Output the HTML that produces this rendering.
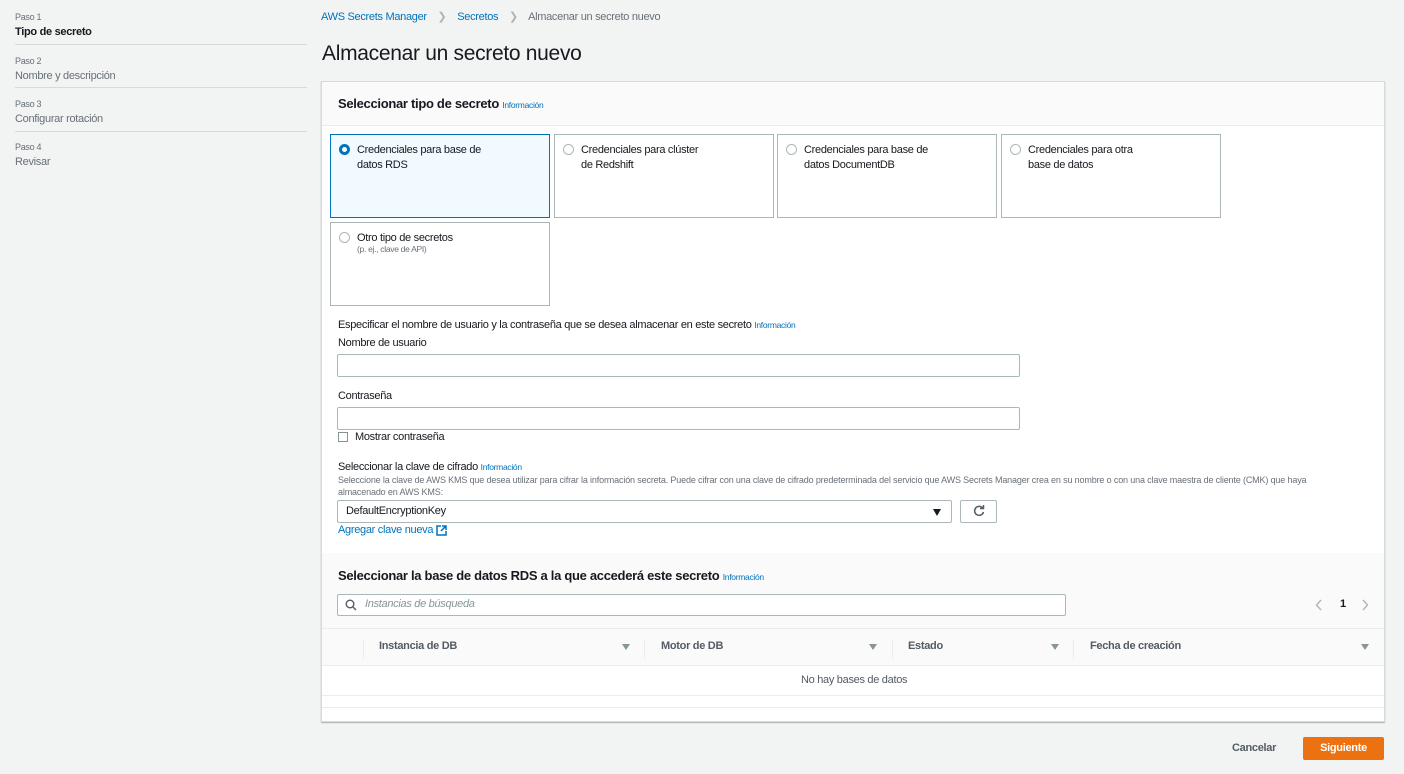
<!DOCTYPE html>
<html><head><meta charset="utf-8"><style>
*{box-sizing:border-box;margin:0;padding:0}
body{width:1404px;height:774px;background:#f2f3f3;font-family:"Liberation Sans",sans-serif;color:#16191f;position:relative;overflow:hidden;letter-spacing:-0.3px}
.a{position:absolute;white-space:nowrap}
.s{font-size:9px;color:#687078}
.st{font-size:11px;color:#687078}
.hr{position:absolute;left:15px;width:292px;height:1px;background:#d5dbdb}
.info{font-size:8.5px;color:#0073bb;font-weight:normal}
.card{position:absolute;width:220px;height:84px;border:1px solid #aab7b8;background:#fff}
.card.sel{border-color:#0073bb;background:#f1faff}
.radio{position:absolute;left:8px;top:9px;width:11px;height:11px;border-radius:50%;border:1px solid #aab7b8;background:#fff}
.sel .radio{border:3px solid #0073bb}
.card .t{position:absolute;left:26px;top:8px;font-size:11px;line-height:15px;color:#16191f}
.inp{position:absolute;border:1px solid #aab7b8;background:#fff;border-radius:2px}
.lab{font-size:11px;color:#16191f}
.th{font-size:11px;font-weight:bold;color:#545b64}
.tri{position:absolute;width:0;height:0;border-left:4px solid transparent;border-right:4px solid transparent;border-top:6px solid #879596}
</style></head><body>
<div class="a s" style="left:15px;top:12px">Paso 1</div>
<div class="a" style="left:15px;top:26px;font-size:11px;font-weight:bold">Tipo de secreto</div>
<div class="hr" style="top:44px"></div>
<div class="a s" style="left:15px;top:56px">Paso 2</div>
<div class="a st" style="left:15px;top:70px">Nombre y descripción</div>
<div class="hr" style="top:87px"></div>
<div class="a s" style="left:15px;top:99px">Paso 3</div>
<div class="a st" style="left:15px;top:113px">Configurar rotación</div>
<div class="hr" style="top:131px"></div>
<div class="a s" style="left:15px;top:142px">Paso 4</div>
<div class="a st" style="left:15px;top:156px">Revisar</div>

<div class="a" style="left:321px;top:10px;font-size:11px;color:#0073bb">AWS Secrets Manager <span style="color:#aab7b8;margin:0 8px">&#x276F;</span> Secretos <span style="color:#aab7b8;margin:0 8px">&#x276F;</span> <span style="color:#687078">Almacenar un secreto nuevo</span></div>
<div class="a" style="left:322px;top:42px;font-size:21px;color:#16191f">Almacenar un secreto nuevo</div>

<div class="a" style="left:321px;top:81px;width:1064px;height:641px;background:#fff;border:1px solid #d5dbdb;box-shadow:0 1px 1px rgba(0,28,36,.3)">
 <div style="position:absolute;left:0;top:0;width:1062px;height:44px;background:#fafafa;border-bottom:1px solid #eaeded"></div>
 <div class="a" style="left:16px;top:14px;font-size:13px;font-weight:bold">Seleccionar tipo de secreto <span class="info">Información</span></div>
 <div class="card sel" style="left:8px;top:52px"><div class="radio"></div><div class="t">Credenciales para base de<br>datos RDS</div></div>
 <div class="card" style="left:232px;top:52px"><div class="radio"></div><div class="t">Credenciales para clúster<br>de Redshift</div></div>
 <div class="card" style="left:455px;top:52px"><div class="radio"></div><div class="t">Credenciales para base de<br>datos DocumentDB</div></div>
 <div class="card" style="left:679px;top:52px"><div class="radio"></div><div class="t">Credenciales para otra<br>base de datos</div></div>
 <div class="card" style="left:8px;top:140px"><div class="radio"></div><div class="t">Otro tipo de secretos<br><span style="font-size:8.5px;color:#687078;position:relative;top:-4px">(p. ej., clave de API)</span></div></div>

 <div class="a lab" style="left:16px;top:237px">Especificar el nombre de usuario y la contraseña que se desea almacenar en este secreto <span class="info">Información</span></div>
 <div class="a lab" style="left:16px;top:255px">Nombre de usuario</div>
 <div class="inp" style="left:15px;top:272px;width:683px;height:23px"></div>
 <div class="a lab" style="left:16px;top:308px">Contraseña</div>
 <div class="inp" style="left:15px;top:325px;width:683px;height:23px"></div>
 <div class="a" style="left:16px;top:350px;width:10px;height:10px;border:1px solid #879596"></div>
 <div class="a lab" style="left:33px;top:349px">Mostrar contraseña</div>

 <div class="a lab" style="left:16px;top:379px">Seleccionar la clave de cifrado <span class="info">Información</span></div>
 <div class="a" style="left:16px;top:392px;font-size:9px;color:#687078;line-height:12px;white-space:normal;width:1010px;letter-spacing:-0.15px">Seleccione la clave de AWS KMS que desea utilizar para cifrar la información secreta. Puede cifrar con una clave de cifrado predeterminada del servicio que AWS Secrets Manager crea en su nombre o con una clave maestra de cliente (CMK) que haya almacenado en AWS KMS:</div>
 <div class="inp" style="left:15px;top:418px;width:615px;height:23px"></div>
 <div class="a lab" style="left:24px;top:423px">DefaultEncryptionKey</div>
 <div class="tri" style="left:611px;top:427px;border-top-color:#16191f;border-left-width:4.5px;border-right-width:4.5px;border-top-width:7px"></div>
 <div class="inp" style="left:638px;top:418px;width:37px;height:23px"></div>
 <svg class="a" style="left:650px;top:422px" width="14" height="14" viewBox="0 0 14 14"><path d="M11 4.5A4.5 4.5 0 1 0 11.5 8" fill="none" stroke="#545b64" stroke-width="1.5"/><path d="M8 4.5h3.5V1" fill="none" stroke="#545b64" stroke-width="1.5"/></svg>
 <div class="a" style="left:16px;top:442px;font-size:11px;color:#0073bb">Agregar clave nueva</div>
 <svg class="a" style="left:114px;top:443px" width="11" height="11" viewBox="0 0 11 11"><path d="M5 1H1v9h9V6" fill="none" stroke="#0073bb" stroke-width="1.5"/><path d="M6 1h4v4M10 1L5 6" fill="none" stroke="#0073bb" stroke-width="1.5"/></svg>

 <div style="position:absolute;left:0;top:471px;width:1062px;height:75px;background:#fafafa"></div>
 <div class="a" style="left:16px;top:486px;font-size:13px;font-weight:bold">Seleccionar la base de datos RDS a la que accederá este secreto <span class="info">Información</span></div>
 <div class="inp" style="left:15px;top:512px;width:729px;height:22px"></div>
 <svg class="a" style="left:23px;top:517px" width="12" height="12" viewBox="0 0 12 12"><circle cx="5" cy="5" r="3.8" fill="none" stroke="#545b64" stroke-width="1.4"/><path d="M8 8l3 3" stroke="#545b64" stroke-width="1.4"/></svg>
 <div class="a" style="left:43px;top:516px;font-size:11px;color:#879596;font-style:italic">Instancias de búsqueda</div>
 <svg class="a" style="left:993px;top:517px" width="8" height="12" viewBox="0 0 8 12"><path d="M6 1L1.5 6L6 11" fill="none" stroke="#aab7b8" stroke-width="1.4"/></svg>
 <div class="a" style="left:1018px;top:516px;font-size:11px;font-weight:bold">1</div>
 <svg class="a" style="left:1039px;top:517px" width="8" height="12" viewBox="0 0 8 12"><path d="M2 1L6.5 6L2 11" fill="none" stroke="#aab7b8" stroke-width="1.4"/></svg>
 <div style="position:absolute;left:0;top:546px;width:1062px;height:38px;background:#fafafa;border-top:1px solid #eaeded;border-bottom:1px solid #eaeded"></div>
 <div class="a" style="left:41px;top:557px;width:1px;height:20px;background:#eaeded"></div>
 <div class="a th" style="left:57px;top:558px">Instancia de DB</div>
 <div class="tri" style="left:300px;top:562px"></div>
 <div class="a" style="left:322px;top:557px;width:1px;height:20px;background:#eaeded"></div>
 <div class="a th" style="left:339px;top:558px">Motor de DB</div>
 <div class="tri" style="left:547px;top:562px"></div>
 <div class="a" style="left:570px;top:557px;width:1px;height:20px;background:#eaeded"></div>
 <div class="a th" style="left:586px;top:558px">Estado</div>
 <div class="tri" style="left:729px;top:562px"></div>
 <div class="a" style="left:751px;top:557px;width:1px;height:20px;background:#eaeded"></div>
 <div class="a th" style="left:768px;top:558px">Fecha de creación</div>
 <div class="tri" style="left:1039px;top:562px"></div>
 <div class="a" style="left:479px;top:592px;font-size:11px;color:#545b64">No hay bases de datos</div>
 <div style="position:absolute;left:0;top:613px;width:1062px;height:1px;background:#eaeded"></div>
 <div style="position:absolute;left:0;top:625px;width:1062px;height:1px;background:#eaeded"></div>
</div>

<div class="a" style="left:1232px;top:742px;font-size:11px;font-weight:bold;color:#545b64">Cancelar</div>
<div class="a" style="left:1303px;top:737px;width:81px;height:23px;background:#ec7211;border-radius:2px;color:#fff;font-size:11px;font-weight:bold;text-align:center;line-height:23px">Siguiente</div>
</body></html>
